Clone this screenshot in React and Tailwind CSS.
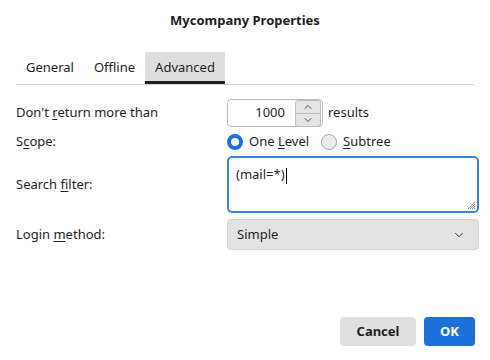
import { ChevronDown, ChevronUp } from "lucide-react";

const font = { fontFamily: '"Noto Sans", "Open Sans", sans-serif' };

const Tabs = () => {
  const tabs = ["General", "Offline", "Advanced"];
  return (
    <div className="mx-4 flex border-b border-[#d6d6d6] h-[33px]">
      {tabs.map((t) => (
        <div
          key={t}
          className={
            t === "Advanced"
              ? "px-[10px] flex items-center bg-[#dedede] border-b-[3px] border-[#222] pt-[2px]"
              : "px-[10px] flex items-center pt-[2px] border-b-[3px] border-transparent"
          }
        >
          {t}
        </div>
      ))}
    </div>
  );
};

const Radio = ({ checked, label }) => (
  <div className="flex items-center gap-[6px]">
    {checked ? (
      <span className="w-[16px] h-[16px] rounded-full border-[4px] border-[#1c71d8] bg-white" />
    ) : (
      <span className="w-[16px] h-[16px] rounded-full border border-[#a8a8a8] bg-[#ececec]" />
    )}
    <span>{label}</span>
  </div>
);

export default function App() {
  return (
    <div
      className="w-[490px] h-[360px] bg-white text-[13px] text-[#1e1e1e] relative overflow-hidden"
      style={font}
    >
      <div className="h-[40px] flex items-center justify-center font-bold pt-[1px]">
        Mycompany Properties
      </div>
      <div className="mt-[12px]">
        <Tabs />
      </div>

      <div className="pl-4 pr-[11px] mt-[14px] grid grid-cols-[211px_1fr]">
        <div className="h-[28px] flex items-center">
          <span>
            Don't <u className="underline-offset-2">r</u>eturn more than
          </span>
        </div>
        <div className="h-[28px] flex items-center gap-[5px]">
          <div className="w-[96px] h-[28px] border border-[#bdbdbd] rounded-[4px] flex items-center bg-white">
            <span className="flex-1 text-right pr-[10px]">1000</span>
            <div className="w-[26px] h-[26px] flex flex-col mr-[1px]">
              <div className="flex-1 bg-[#e4e4e4] border border-[#bdbdbd] rounded-t-[3px] flex items-center justify-center">
                <ChevronUp size={12} strokeWidth={1.5} />
              </div>
              <div className="flex-1 bg-[#e4e4e4] border border-t-0 border-[#bdbdbd] rounded-b-[3px] flex items-center justify-center">
                <ChevronDown size={12} strokeWidth={1.5} />
              </div>
            </div>
          </div>
          <span>results</span>
        </div>

        <div className="h-[22px] mt-[4px] flex items-center">
          <span>
            S<u className="underline-offset-2">c</u>ope:
          </span>
        </div>
        <div className="h-[22px] mt-[4px] flex items-center gap-[12px]">
          <Radio
            checked
            label={
              <>
                One <u className="underline-offset-2">L</u>evel
              </>
            }
          />
          <Radio
            label={
              <>
                <u className="underline-offset-2">S</u>ubtree
              </>
            }
          />
        </div>

        <div className="h-[57px] mt-[3px] flex items-center">
          <span>
            Search <u className="underline-offset-2">f</u>ilter:
          </span>
        </div>
        <div className="h-[57px] mt-[3px] border-2 border-[#3584e4] rounded-[5px] relative px-[7px] pt-[7px]">
          <span>(mail=*)</span>
          <span className="inline-block w-[1px] h-[16px] bg-black align-middle ml-[1px]" />
          <svg
            className="absolute right-[1px] bottom-[1px]"
            width="9"
            height="9"
            viewBox="0 0 9 9"
          >
            <path
              d="M8 1L1 8M8 3L3 8M8 5L5 8M8 7L7 8"
              stroke="#8a8a8a"
              strokeWidth="1"
            />
          </svg>
        </div>

        <div className="h-[31px] mt-[6px] flex items-center">
          <span>
            Login <u className="underline-offset-2">m</u>ethod:
          </span>
        </div>
        <div className="h-[31px] mt-[6px] bg-[#e3e3e3] border border-[#d4d4d4] rounded-[4px] flex items-center justify-between pl-[9px] pr-[12px]">
          <span>Simple</span>
          <ChevronDown size={14} strokeWidth={1.5} />
        </div>
      </div>

      <div className="absolute right-[15px] bottom-[14px] flex gap-[8px]">
        <button className="w-[76px] h-[29px] rounded-[4px] bg-[#e0e0e0] font-bold">
          Cancel
        </button>
        <button className="w-[51px] h-[29px] rounded-[4px] bg-[#1c71d8] text-white font-bold">
          OK
        </button>
      </div>
    </div>
  );
}
